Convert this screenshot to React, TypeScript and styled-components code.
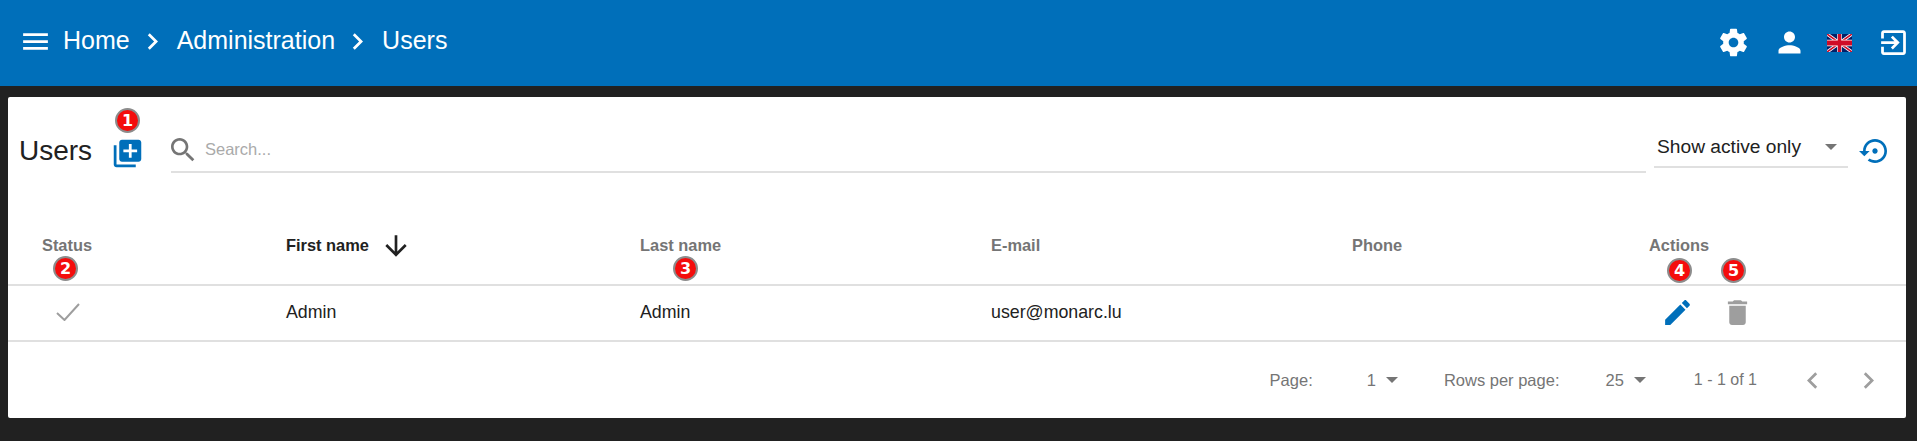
import React from "react";
import styled, { createGlobalStyle } from "styled-components";

const GlobalStyle = createGlobalStyle`
  html, body {
    margin: 0;
    padding: 0;
    background: #212121;
    font-family: "Liberation Sans", Arial, sans-serif;
  }
`;

const Page = styled.div`
  width: 1917px;
  height: 441px;
  overflow: hidden;
  background: #212121;
`;

const Header = styled.header`
  height: 86px;
  box-sizing: border-box;
  padding: 0 7px 4px 19px;
  background: #006fba;
  color: #fff;
  display: flex;
  align-items: center;
  justify-content: space-between;
`;

const Breadcrumbs = styled.nav`
  display: flex;
  align-items: center;
`;

const Crumb = styled.span`
  font-size: 25px;
  line-height: 33px;
  margin: 0 6px 0 8px;
  position: relative;
  top: -1px;

  &:nth-child(2) {
    margin-left: 11px;
  }
`;

const HeaderActions = styled.div`
  display: flex;
  align-items: center;
  gap: 23px;
  padding-top: 3px;
`;

const FlagIcon = styled.svg`
  width: 25px;
  height: 18px;
  margin: 0 2px 0 -2px;
`;

const Icon = styled.svg<{ $size?: number; $color?: string }>`
  width: ${(p) => p.$size ?? 33}px;
  height: ${(p) => p.$size ?? 33}px;
  fill: ${(p) => p.$color ?? "currentColor"};
  flex: none;
  display: block;
`;

const Main = styled.main`
  padding: 11px 11px 0 8px;
`;

const Card = styled.section`
  height: 321px;
  background: #fff;
  border-radius: 2px;
  color: #212121;
`;

const Toolbar = styled.div`
  height: 110px;
  box-sizing: border-box;
  padding: 29px 15px 0 11px;
  display: flex;
  align-items: flex-start;
`;

const Title = styled.h1`
  margin: 0;
  font-size: 28px;
  font-weight: 400;
  line-height: 50px;
  width: 92px;
`;

const AddButton = styled.div`
  position: relative;
  width: 33px;
  height: 46px;
  padding-top: 4px;
  margin-right: 27px;
  display: flex;
  align-items: center;
`;

const SearchField = styled.div`
  flex: 1;
  height: 47px;
  box-sizing: border-box;
  padding-top: 2px;
  display: flex;
  align-items: center;
  gap: 6px;
  border-bottom: 2px solid #e0e0e0;
  color: #757575;

  & > svg {
    margin-left: -4px;
  }
`;

const SearchInput = styled.input`
  flex: 1;
  border: 0;
  outline: 0;
  padding: 0;
  font: 16.5px "Liberation Sans", Arial, sans-serif;

  &::placeholder {
    color: #aaa;
    opacity: 1;
  }
`;

const StatusSelect = styled.div`
  width: 194px;
  height: 42px;
  box-sizing: border-box;
  margin-left: 8px;
  padding: 2px 11px 0 3px;
  display: flex;
  align-items: center;
  justify-content: space-between;
  border-bottom: 2px solid #e0e0e0;
  font-size: 19.2px;
`;

const RestoreButton = styled.div`
  width: 32px;
  margin: 9px 0 0 11px;
`;

const Caret = styled.span`
  width: 0;
  height: 0;
  flex: none;
  border-left: 6.5px solid transparent;
  border-right: 6.5px solid transparent;
  border-top: 6.5px solid #757575;
`;

const Row = styled.div`
  display: grid;
  grid-template-columns: 278px 354px 351px 361px 297px 1fr;
  border-bottom: 2px solid #e0e0e0;
`;

const HeadRow = styled(Row)`
  height: 79px;
  box-sizing: border-box;
`;

const BodyRow = styled(Row)`
  height: 56px;
  box-sizing: border-box;
  padding-bottom: 2px;
  align-items: center;
  font-size: 17.8px;
`;

const HeadCell = styled.div<{ $active?: boolean }>`
  height: 33px;
  margin-top: 22px;
  display: flex;
  align-items: center;
  gap: 11px;
  font-size: 16.4px;
  font-weight: 700;
  color: ${(p) => (p.$active ? "#212121" : "#757575")};
`;

const StatusHead = styled(HeadCell)`
  width: 118px;
  justify-content: center;
`;

const HeadLabel = styled.span`
  position: relative;
`;

const StatusCell = styled.div`
  width: 120px;
  display: flex;
  justify-content: center;
`;

const CheckIcon = styled.svg`
  width: 24px;
  height: 18px;
  fill: none;
  stroke: #9e9e9e;
  stroke-width: 2;
`;

const ActionCell = styled.div`
  display: flex;
  gap: 4px;
`;

const ActionButton = styled.div`
  width: 56px;
  display: flex;
  justify-content: center;
`;

const Badge = styled.span<{ $left: number; $top: number }>`
  position: absolute;
  left: ${(p) => p.$left}px;
  top: ${(p) => p.$top}px;
  width: 25px;
  height: 25px;
  box-sizing: border-box;
  border-radius: 50%;
  border: 2px solid #8c8c8c;
  background: #f40c0c;
  color: #fff;
  font: 700 16px/21px "DejaVu Sans", sans-serif;
  text-align: center;
`;

const Pagination = styled.footer`
  height: 76px;
  padding: 0 10px 0 0;
  display: flex;
  align-items: center;
  justify-content: flex-end;
  font-size: 16.5px;
  color: #757575;
`;

const PageLabel = styled.span<{ $gap: number }>`
  margin-right: ${(p) => p.$gap}px;
`;

const PageSelect = styled.span<{ $gap: number }>`
  display: flex;
  align-items: center;
  gap: 10px;
  margin-right: ${(p) => p.$gap}px;
`;

const PageButton = styled.span`
  width: 56px;
  display: flex;
  justify-content: center;
  color: #9e9e9e;
`;

const RangeLabel = styled.span`
  font-size: 16px;
  margin-right: 27px;
`;

const paths = {
  menu: "M3 18h18v-2H3v2zm0-5h18v-2H3v2zm0-7v2h18V6H3z",
  next: "M10 6L8.59 7.41 13.17 12l-4.58 4.59L10 18l6-6z",
  prev: "M15.41 7.41L14 6l-6 6 6 6 1.41-1.41L10.83 12z",
  settings:
    "M19.43 12.98c.04-.32.07-.64.07-.98s-.03-.66-.07-.98l2.11-1.65c.19-.15.24-.42.12-.64l-2-3.46c-.12-.22-.39-.3-.61-.22l-2.49 1c-.52-.4-1.08-.73-1.69-.98l-.38-2.65C14.46 2.18 14.25 2 14 2h-4c-.25 0-.46.18-.49.42l-.38 2.65c-.61.25-1.17.59-1.69.98l-2.49-1c-.23-.09-.49 0-.61.22l-2 3.46c-.13.22-.07.49.12.64l2.11 1.65c-.04.32-.07.65-.07.98s.03.66.07.98l-2.11 1.65c-.19.15-.24.42-.12.64l2 3.46c.12.22.39.3.61.22l2.49-1c.52.4 1.08.73 1.69.98l.38 2.65c.03.24.24.42.49.42h4c.25 0 .46-.18.49-.42l.38-2.65c.61-.25 1.17-.59 1.69-.98l2.49 1c.23.09.49 0 .61-.22l2-3.46c.12-.22.07-.49-.12-.64l-2.11-1.65zM12 15.5c-1.93 0-3.5-1.57-3.5-3.5s1.57-3.5 3.5-3.5 3.5 1.57 3.5 3.5-1.57 3.5-3.5 3.5z",
  person:
    "M12 12c2.21 0 4-1.79 4-4s-1.79-4-4-4-4 1.79-4 4 1.79 4 4 4zm0 2c-2.67 0-8 1.34-8 4v2h16v-2c0-2.66-5.33-4-8-4z",
  exit: "M10.09 15.59L11.5 17l5-5-5-5-1.41 1.41L12.67 11H3v2h9.67l-2.58 2.59zM19 3H5c-1.11 0-2 .9-2 2v4h2V5h14v14H5v-4H3v4c0 1.1.89 2 2 2h14c1.1 0 2-.9 2-2V5c0-1.1-.9-2-2-2z",
  add: "M4 6H2v14c0 1.1.9 2 2 2h14v-2H4V6zm16-4H8c-1.1 0-2 .9-2 2v12c0 1.1.9 2 2 2h12c1.1 0 2-.9 2-2V4c0-1.1-.9-2-2-2zm-1 9h-4v4h-2v-4H9V9h4V5h2v4h4v2z",
  search:
    "M15.5 14h-.79l-.28-.27C15.41 12.59 16 11.11 16 9.5 16 5.91 13.09 3 9.5 3S3 5.91 3 9.5 5.91 16 9.5 16c1.61 0 3.09-.59 4.23-1.57l.27.28v.79l5 4.99L20.49 19l-4.99-5zm-6 0C7.01 14 5 11.99 5 9.5S7.01 5 9.5 5 14 7.01 14 9.5 11.99 14 9.5 14z",
  restore:
    "M14 12c0-1.1-.9-2-2-2s-2 .9-2 2 .9 2 2 2 2-.9 2-2zm-2-9c-4.97 0-9 4.03-9 9H0l4 4 4-4H5c0-3.87 3.13-7 7-7s7 3.13 7 7-3.13 7-7 7c-1.51 0-2.91-.49-4.06-1.3l-1.42 1.44C8.04 20.3 9.94 21 12 21c4.97 0 9-4.03 9-9s-4.03-9-9-9z",
  arrowDown:
    "M20 12l-1.41-1.41L13 16.17V4h-2v12.17l-5.58-5.59L4 12l8 8 8-8z",
  edit: "M3 17.25V21h3.75L17.81 9.94l-3.75-3.75L3 17.25zM20.71 7.04c.39-.39.39-1.02 0-1.41l-2.34-2.34c-.39-.39-1.02-.39-1.41 0l-1.83 1.83 3.75 3.75 1.83-1.83z",
  trash:
    "M6 19c0 1.1.9 2 2 2h8c1.1 0 2-.9 2-2V7H6v12zM19 4h-3.5l-1-1h-5l-1 1H5v2h14V4z",
};

const MaterialIcon: React.FC<{ d: string; size?: number; color?: string }> = ({
  d,
  size,
  color,
}) => (
  <Icon viewBox="0 0 24 24" $size={size} $color={color}>
    <path d={d} />
  </Icon>
);

const UkFlag = () => (
  <FlagIcon viewBox="0 0 60 30" preserveAspectRatio="none">
    <path d="M0 0v30h60V0z" fill="#012169" />
    <path d="M0 0l60 30m0-30L0 30" stroke="#fff" strokeWidth="6" />
    <path d="M0 0l60 30m0-30L0 30" stroke="#d00c27" strokeWidth="3" />
    <path d="M30 0v30M0 15h60" stroke="#fff" strokeWidth="11" />
    <path d="M30 0v30M0 15h60" stroke="#d00c27" strokeWidth="8" />
  </FlagIcon>
);

const BLUE = "#006fba";

export default function App() {
  return (
    <Page>
      <GlobalStyle />
      <Header>
        <Breadcrumbs>
          <MaterialIcon d={paths.menu} />
          <Crumb>Home</Crumb>
          <MaterialIcon d={paths.next} />
          <Crumb>Administration</Crumb>
          <MaterialIcon d={paths.next} />
          <Crumb>Users</Crumb>
        </Breadcrumbs>
        <HeaderActions>
          <MaterialIcon d={paths.settings} />
          <MaterialIcon d={paths.person} />
          <UkFlag />
          <MaterialIcon d={paths.exit} />
        </HeaderActions>
      </Header>
      <Main>
        <Card>
          <Toolbar>
            <Title>Users</Title>
            <AddButton>
              <MaterialIcon d={paths.add} color={BLUE} />
              <Badge $left={4} $top={-18}>1</Badge>
            </AddButton>
            <SearchField>
              <MaterialIcon d={paths.search} color="#757575" size={32} />
              <SearchInput placeholder="Search..." />
            </SearchField>
            <StatusSelect>
              <span>Show active only</span>
              <Caret />
            </StatusSelect>
            <RestoreButton>
              <MaterialIcon d={paths.restore} color={BLUE} size={32} />
            </RestoreButton>
          </Toolbar>
          <HeadRow>
            <StatusHead>
              <HeadLabel>
                Status
                <Badge $left={11} $top={20}>2</Badge>
              </HeadLabel>
            </StatusHead>
            <HeadCell $active>
              First name
              <MaterialIcon d={paths.arrowDown} size={32} color="#212121" />
            </HeadCell>
            <HeadCell>
              <HeadLabel>
                Last name
                <Badge $left={33} $top={20}>3</Badge>
              </HeadLabel>
            </HeadCell>
            <HeadCell>E-mail</HeadCell>
            <HeadCell>Phone</HeadCell>
            <HeadCell>
              <HeadLabel>
                Actions
                <Badge $left={18} $top={22}>4</Badge>
                <Badge $left={72} $top={22}>5</Badge>
              </HeadLabel>
            </HeadCell>
          </HeadRow>
          <BodyRow>
            <StatusCell>
              <CheckIcon viewBox="0 0 24 18">
                <path d="M1 10l7.5 7L23 1" />
              </CheckIcon>
            </StatusCell>
            <div>Admin</div>
            <div>Admin</div>
            <div>user@monarc.lu</div>
            <div />
            <ActionCell>
              <ActionButton>
                <MaterialIcon d={paths.edit} color={BLUE} />
              </ActionButton>
              <ActionButton>
                <MaterialIcon d={paths.trash} color="#9e9e9e" />
              </ActionButton>
            </ActionCell>
          </BodyRow>
          <Pagination>
            <PageLabel $gap={54}>Page:</PageLabel>
            <PageSelect $gap={46}>
              1 <Caret />
            </PageSelect>
            <PageLabel $gap={46}>Rows per page:</PageLabel>
            <PageSelect $gap={48}>
              25 <Caret />
            </PageSelect>
            <RangeLabel>1 - 1 of 1</RangeLabel>
            <PageButton>
              <MaterialIcon d={paths.prev} />
            </PageButton>
            <PageButton>
              <MaterialIcon d={paths.next} />
            </PageButton>
          </Pagination>
        </Card>
      </Main>
    </Page>
  );
}
